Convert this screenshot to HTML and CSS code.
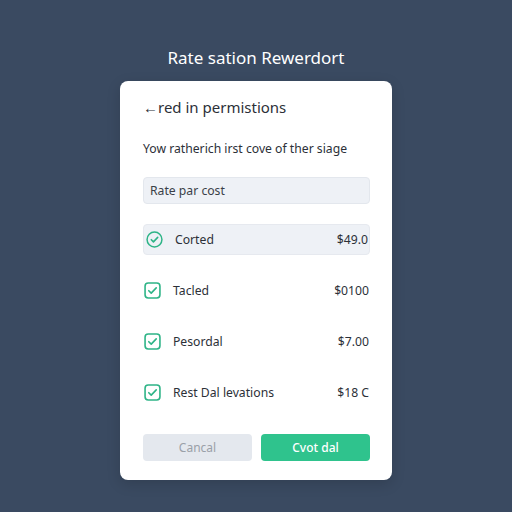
FILE: index.html
```html
<!DOCTYPE html>
<html lang="en">
<head>
<meta charset="UTF-8" />
<meta name="viewport" content="width=device-width, initial-scale=1.0" />
<title>Rate sation Rewerdort</title>
<link rel="stylesheet" href="styles.css">
</head>
<body>
<div class="page">
<h1 class="title">Rate sation Rewerdort</h1>

<div class="card">
  <h2 class="card-heading">&#8592;red in permistions</h2>
  <p class="card-sub">Yow ratherich irst cove of ther siage</p>

  <div class="field">Rate par cost</div>

  <!-- 项目列表 -->
  <ul class="items">
    <li class="item selected">
      <svg class="icon" viewBox="0 0 16 16" width="17" height="17">
        <circle cx="8" cy="8" r="7" fill="none" stroke="#2eb487" stroke-width="1.4"/>
        <path d="M5 8.2l2 2 4-4.2" fill="none" stroke="#2eb487" stroke-width="1.5" stroke-linecap="round" stroke-linejoin="round"/>
      </svg>
      <span class="item-name">Corted</span>
      <span class="item-price">$49.0</span>
    </li>
    <li class="item">
      <svg class="icon" viewBox="0 0 16 16" width="17" height="17">
        <rect x="1" y="1" width="14" height="14" rx="3" fill="none" stroke="#2eb487" stroke-width="1.5"/>
        <path d="M4.5 8.2l2.3 2.3 4.7-5" fill="none" stroke="#2eb487" stroke-width="1.5" stroke-linecap="round" stroke-linejoin="round"/>
      </svg>
      <span class="item-name">Tacled</span>
      <span class="item-price">$0100</span>
    </li>
    <li class="item">
      <svg class="icon" viewBox="0 0 16 16" width="17" height="17">
        <rect x="1" y="1" width="14" height="14" rx="3" fill="none" stroke="#2eb487" stroke-width="1.5"/>
        <path d="M4.5 8.2l2.3 2.3 4.7-5" fill="none" stroke="#2eb487" stroke-width="1.5" stroke-linecap="round" stroke-linejoin="round"/>
      </svg>
      <span class="item-name">Pesordal</span>
      <span class="item-price">$7.00</span>
    </li>
    <li class="item">
      <svg class="icon" viewBox="0 0 16 16" width="17" height="17">
        <rect x="1" y="1" width="14" height="14" rx="3" fill="none" stroke="#2eb487" stroke-width="1.5"/>
        <path d="M4.5 8.2l2.3 2.3 4.7-5" fill="none" stroke="#2eb487" stroke-width="1.5" stroke-linecap="round" stroke-linejoin="round"/>
      </svg>
      <span class="item-name">Rest Dal levations</span>
      <span class="item-price">$18 C</span>
    </li>
  </ul>

  <div class="actions">
    <button type="button" class="btn btn-cancel">Cancal</button>
    <button type="button" class="btn btn-ok">Cvot dal</button>
  </div>
</div>
</div>
</body>
</html>
```

FILE: styles.css
```css
body {
    margin: 0;
    background-color: #3a4a61;
    font-family: "Noto Sans", "Open Sans", Arial, sans-serif;
    min-height: 512px;
}
.page {
    padding-top: 46px;
    display: flex;
    flex-direction: column;
    align-items: center;
}
.title {
    margin: 0 0 11px;
    font-size: 17px;
    line-height: 24px;
    font-weight: 400;
    color: #ffffff;
    text-align: center;
}
.card {
    box-sizing: border-box;
    width: 272px;
    height: 399px;
    background-color: #ffffff;
    border-radius: 8px;
    padding: 16px 22px 19px 23px;
    box-shadow: 0 4px 14px rgba(0, 0, 0, 0.15);
}
.card-heading {
    margin: 0;
    font-size: 15px;
    line-height: 20px;
    font-weight: 400;
    color: #2c3038;
}
.card-sub {
    margin: 23px 0 0;
    font-size: 12.2px;
    line-height: 18px;
    color: #2c3038;
}
.field {
    margin-top: 19px;
    height: 27px;
    box-sizing: border-box;
    padding: 0 6px;
    display: flex;
    align-items: center;
    background-color: #eef1f6;
    border: 1px solid #e3e7ed;
    border-radius: 4px;
    font-size: 12.2px;
    color: #3a3f48;
}
.items {
    list-style: none;
    margin: 20px 0 0;
    padding: 0;
    display: flex;
    flex-direction: column;
    gap: 19px;
}
.item {
    height: 32px;
    box-sizing: border-box;
    display: flex;
    align-items: center;
    padding: 0 1px;
    font-size: 12.2px;
    color: #2c3038;
    border-radius: 4px;
}
.item.selected {
    height: 31px;
    background-color: #eef1f6;
    border: 1px solid #e6e9ef;
    padding-left: 2px;
}
.icon {
    flex: none;
}
.item-name {
    margin-left: 12px;
    flex: 1;
}
.item-price {
    text-align: right;
}
.actions {
    margin-top: 26px;
    display: flex;
    gap: 9px;
}
.btn {
    flex: 1;
    height: 27px;
    border: none;
    border-radius: 4px;
    font-family: inherit;
    font-size: 12px;
    cursor: pointer;
}
.btn-cancel {
    background-color: #e4e8ee;
    color: #9aa0a8;
}
.btn-ok {
    background-color: #2fc38d;
    color: #ffffff;
    font-weight: 500;
}
```
